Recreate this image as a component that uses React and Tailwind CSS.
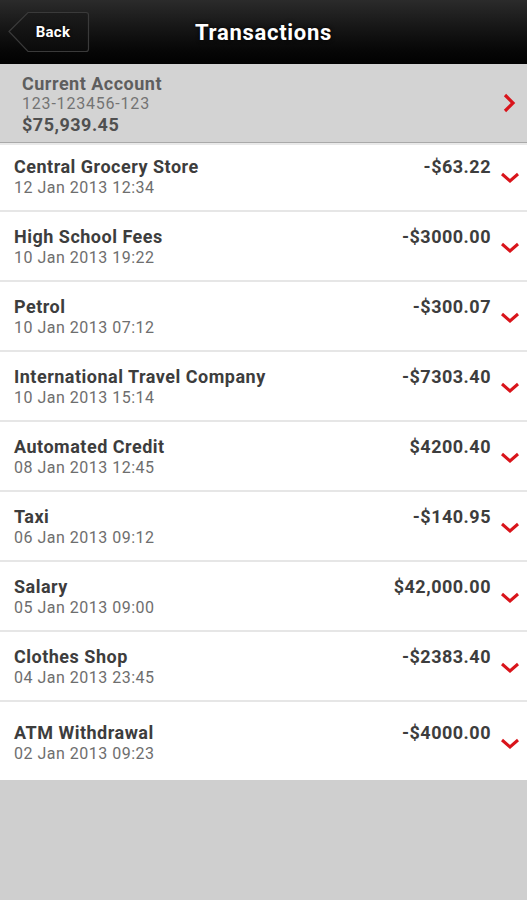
import { useState } from "react";

const transactions = [
  { name: "Central Grocery Store", date: "12 Jan 2013 12:34", amount: "-$63.22" },
  { name: "High School Fees", date: "10 Jan 2013 19:22", amount: "-$3000.00" },
  { name: "Petrol", date: "10 Jan 2013 07:12", amount: "-$300.07" },
  { name: "International Travel Company", date: "10 Jan 2013 15:14", amount: "-$7303.40" },
  { name: "Automated Credit", date: "08 Jan 2013 12:45", amount: "$4200.40" },
  { name: "Taxi", date: "06 Jan 2013 09:12", amount: "-$140.95" },
  { name: "Salary", date: "05 Jan 2013 09:00", amount: "$42,000.00" },
  { name: "Clothes Shop", date: "04 Jan 2013 23:45", amount: "-$2383.40" },
  { name: "ATM Withdrawal", date: "02 Jan 2013 09:23", amount: "-$4000.00" },
];

function ChevronDown() {
  return (
    <svg width="20" height="12" viewBox="0 0 20 12" className="shrink-0">
      <path d="M2 2 L10 9 L18 2" fill="none" stroke="#d9141b" strokeWidth="3" />
    </svg>
  );
}

function ChevronRight() {
  return (
    <svg width="14" height="20" viewBox="0 0 14 20">
      <path d="M3 2 L11 10 L3 18" fill="none" stroke="#d9141b" strokeWidth="3.2" />
    </svg>
  );
}

function BackButton() {
  return (
    <button className="relative w-[82px] h-[42px] flex items-center justify-center pl-[8px]">
      <svg width="82" height="42" viewBox="0 0 82 42" className="absolute inset-0">
        <defs>
          <linearGradient id="bb" x1="0" y1="0" x2="0" y2="1">
            <stop offset="0" stopColor="#1c1c1c" />
            <stop offset="1" stopColor="#0a0a0a" />
          </linearGradient>
        </defs>
        <path
          d="M1 20.5 L20 1.5 L78 1.5 Q80.5 1.5 80.5 4 L80.5 38 Q80.5 40.5 78 40.5 L20 40.5 Z"
          fill="url(#bb)"
          stroke="#3a3a3a"
          strokeWidth="1.2"
        />
      </svg>
      <span className="relative text-white font-bold text-[15px] tracking-[0.3px] [text-shadow:0_0_3px_#000]">
        Back
      </span>
    </button>
  );
}

export default function App() {
  const [open, setOpen] = useState(null);
  return (
    <div className="w-[527px] h-[900px] bg-[#cfcfcf] flex flex-col font-['Roboto','Liberation_Sans',sans-serif]">
      <div className="h-16 shrink-0 bg-gradient-to-b from-[#2b2b2b] to-[#020202] relative flex items-center px-[8px]">
        <BackButton />
        <h1 className="absolute left-0 right-0 text-center text-white font-bold text-[22px] tracking-[0.7px] [text-shadow:0_0_4px_#000] pointer-events-none">
          Transactions
        </h1>
      </div>

      <div className="h-[79px] shrink-0 bg-[#d3d3d3] border-b border-[#a9a9a9] flex items-center pt-[4px] pl-[22px] pr-[11px]">
        <div className="flex-1 flex flex-col">
          <span className="text-[18px] leading-[20px] font-bold tracking-[0.5px] text-[#5e5e5e]">Current Account</span>
          <span className="text-[16px] leading-[20px] tracking-[0.8px] text-[#737373]">123-123456-123</span>
          <span className="text-[18px] leading-[22px] font-bold tracking-[0.5px] text-[#505050]">$75,939.45</span>
        </div>
        <div className="-mt-[4px]">
          <ChevronRight />
        </div>
      </div>

      <div className="bg-white flex flex-col">
        {transactions.map((t, i) => {
          const first = i === 0;
          const last = i === transactions.length - 1;
          return (
            <div
              key={t.name}
              onClick={() => setOpen(open === i ? null : i)}
              className={
                "flex pl-[14px] pr-[7px] " +
                (first
                  ? "h-[67px] pt-[12px] border-t-2 border-[#e9e9e9]"
                  : last
                  ? "h-[80px] pt-[21px] border-t-2 border-[#e6e6e6]"
                  : "h-[70px] pt-[15px] border-t-2 border-[#e6e6e6]")
              }
            >
              <div className="flex-1 flex flex-col">
                <span className="text-[18px] leading-[20px] font-bold tracking-[0.5px] text-[#3d3d3d]">{t.name}</span>
                <span className="text-[16px] leading-[22px] tracking-[0.5px] text-[#6e6e6e]">{t.date}</span>
              </div>
              <span className="text-[18px] leading-[20px] font-bold tracking-[0.5px] text-[#3d3d3d]">{t.amount}</span>
              <div className="ml-[9px] pt-[15px]">
                <ChevronDown />
              </div>
            </div>
          );
        })}
      </div>
    </div>
  );
}
